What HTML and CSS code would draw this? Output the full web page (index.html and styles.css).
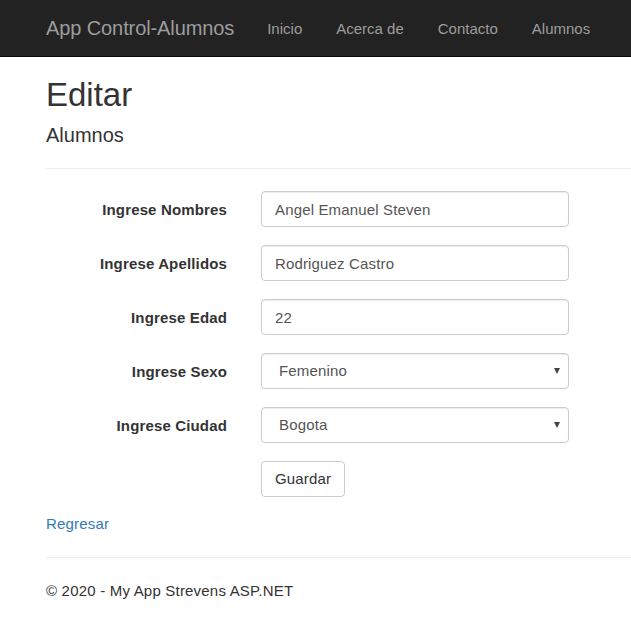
FILE: index.html
```html
<!DOCTYPE html>
<html lang="es">
<head>
<meta charset="utf-8">
<title>Editar - App Control-Alumnos</title>
<link rel="stylesheet" href="styles.css">
</head>
<body>
<header class="navbar">
  <a class="brand" href="#">App Control-Alumnos</a>
  <nav class="nav">
    <a href="#">Inicio</a>
    <a href="#">Acerca de</a>
    <a href="#">Contacto</a>
    <a href="#">Alumnos</a>
  </nav>
</header>
<main class="container">
  <h2 class="title">Editar</h2>
  <h4 class="subtitle">Alumnos</h4>
  <hr class="rule rule-top">
  <form class="form">
    <div class="row">
      <label class="label">Ingrese Nombres</label>
      <input class="control" type="text" value="Angel Emanuel Steven">
    </div>
    <div class="row">
      <label class="label">Ingrese Apellidos</label>
      <input class="control" type="text" value="Rodriguez Castro">
    </div>
    <div class="row">
      <label class="label">Ingrese Edad</label>
      <input class="control" type="text" value="22">
    </div>
    <div class="row">
      <label class="label">Ingrese Sexo</label>
      <div class="select-wrap">
        <select class="control select">
          <option>Femenino</option>
          <option>Masculino</option>
        </select>
      </div>
    </div>
    <div class="row">
      <label class="label">Ingrese Ciudad</label>
      <div class="select-wrap">
        <select class="control select">
          <option>Bogota</option>
          <option>Medellin</option>
        </select>
      </div>
    </div>
    <div class="row">
      <span class="label"></span>
      <button class="btn" type="button">Guardar</button>
    </div>
  </form>
  <div class="back"><a href="#">Regresar</a></div>
  <hr class="rule rule-bottom">
  <footer class="footer">© 2020 - My App Strevens ASP.NET</footer>
</main>
</body>
</html>
```
FILE: styles.css
```css
* { box-sizing: border-box; }
html, body { margin: 0; padding: 0; }
body {
  font-family: "Liberation Sans", Arial, sans-serif;
  font-size: 15px;
  color: #333;
  background: #fff;
  overflow: hidden;
}
a { text-decoration: none; }

.navbar {
  display: flex;
  align-items: flex-start;
  height: 57px;
  background: #222;
  border-bottom: 1px solid #080808;
  padding-left: 46px;
}
.brand {
  font-size: 20px;
  line-height: 20px;
  padding-top: 18px;
  color: #9d9d9d;
  margin-right: 33px;
  letter-spacing: -0.1px;
}
.nav {
  display: flex;
  gap: 34px;
}
.nav a {
  font-size: 15px;
  line-height: 20px;
  padding-top: 19px;
  color: #9d9d9d;
}

.container { padding-left: 46px; }
.title {
  margin: 20px 0 0;
  font-size: 33px;
  line-height: 36px;
  font-weight: 400;
}
.subtitle {
  margin: 11px 0 0;
  font-size: 20px;
  line-height: 22px;
  font-weight: 400;
}
.rule {
  border: 0;
  border-top: 1px solid #eee;
  height: 0;
  margin: 0;
}
.rule-top { margin-top: 22px; }
.form { margin-top: 22px; }
.row {
  display: flex;
  align-items: center;
  gap: 34px;
  margin-bottom: 18px;
}
.label {
  width: 181px;
  flex: none;
  text-align: right;
  font-weight: 700;
  font-size: 15px;
  letter-spacing: 0.15px;
}
.control {
  width: 308px;
  height: 36px;
  padding: 6px 13px;
  font-family: "Liberation Sans", Arial, sans-serif;
  font-size: 15px;
  letter-spacing: 0.15px;
  color: #555;
  background: #fff;
  border: 1px solid #ccc;
  border-radius: 4px;
  box-shadow: inset 0 1px 1px rgba(0,0,0,.075);
  outline: none;
}
.select-wrap { position: relative; width: 308px; }
.select {
  appearance: none;
  -webkit-appearance: none;
  padding: 5px 13px 7px 17px;
}
.select-wrap::after {
  content: "";
  position: absolute;
  right: 9px;
  top: 15px;
  border-left: 3.5px solid transparent;
  border-right: 3.5px solid transparent;
  border-top: 6px solid #444;
}
.btn {
  height: 36px;
  padding: 0 13px 2px;
  font-family: "Liberation Sans", Arial, sans-serif;
  font-size: 15px;
  letter-spacing: 0.15px;
  color: #333;
  background: #fff;
  border: 1px solid #ccc;
  border-radius: 4px;
}
.form .row:last-child { margin-bottom: 0; }
.back {
  margin-top: 16px;
  line-height: 21px;
  letter-spacing: 0.2px;
}
.back a { color: #337ab7; }
.rule-bottom { margin-top: 23px; }
.footer {
  margin-top: 22px;
  line-height: 21px;
  letter-spacing: 0.2px;
}
```
